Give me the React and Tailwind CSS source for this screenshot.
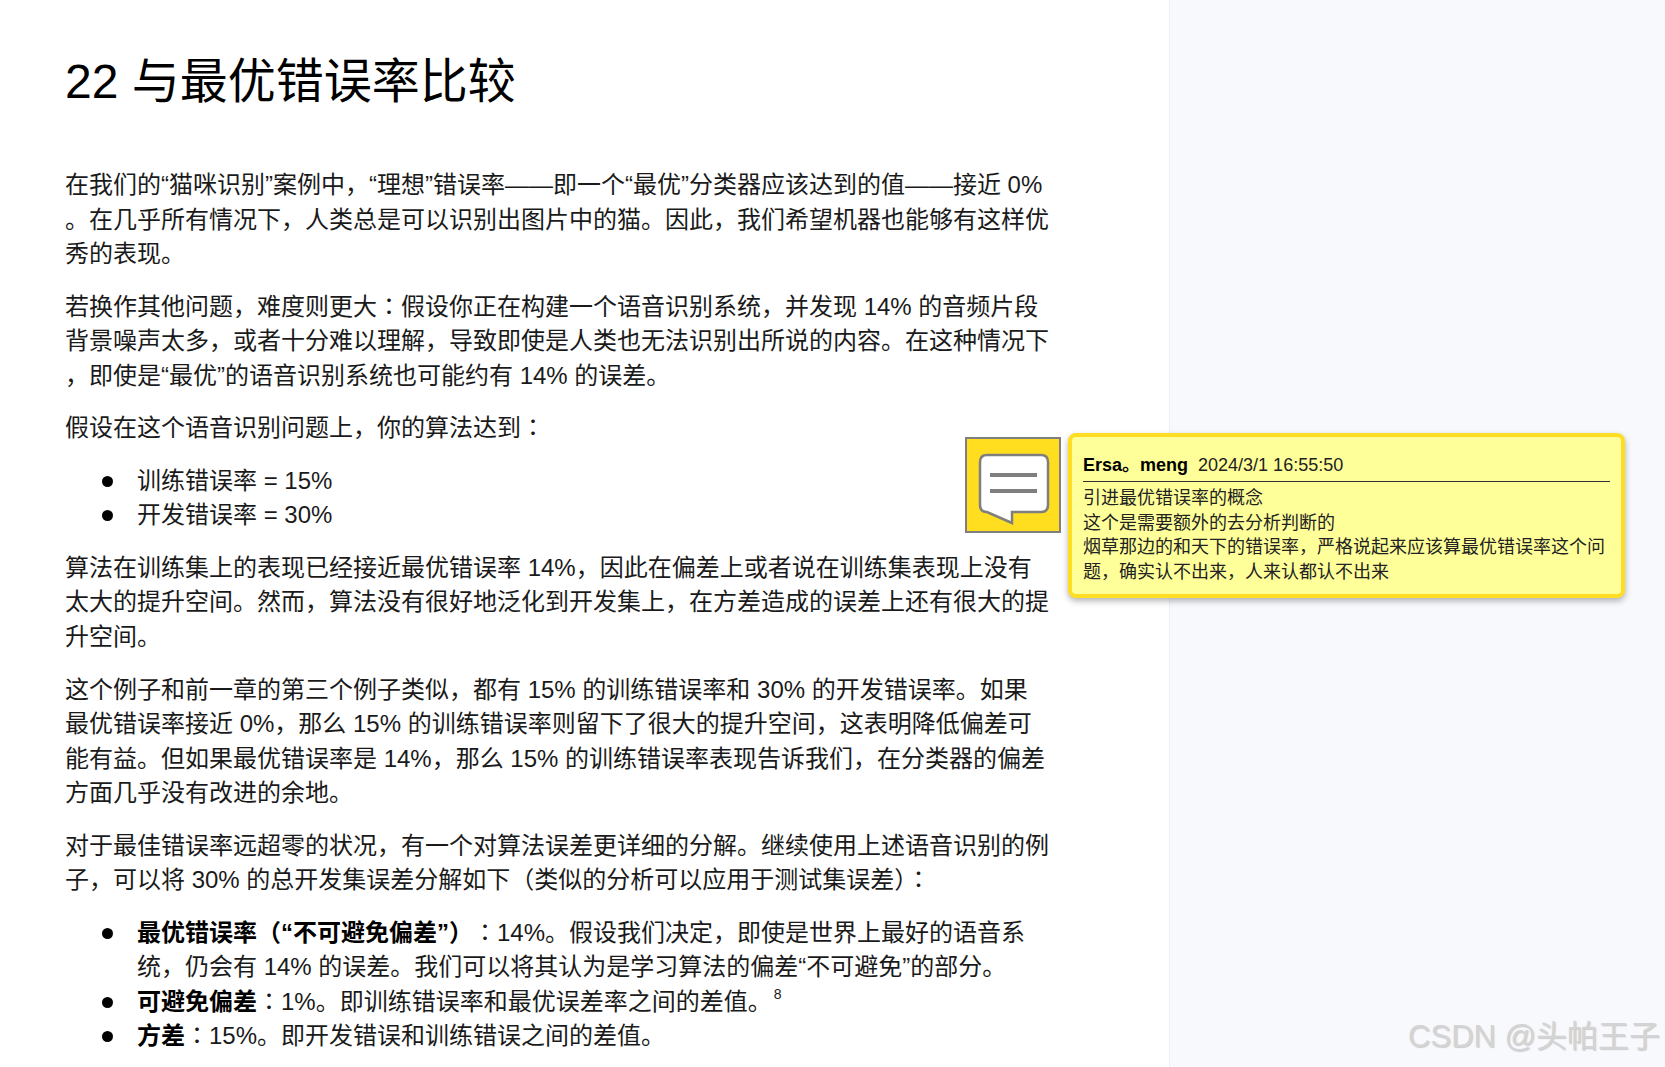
const Colon = ({ className = '' }) => <span className={`font-['Noto_Sans_CJK_JP'] leading-[0] ${className}`}>：</span>

const Para = ({ children }) => (
  <p className="mb-[18px] whitespace-nowrap">{children}</p>
)

const Bullet = ({ children }) => (
  <li className="flex whitespace-nowrap">
    <span className="w-[72px] flex justify-start pl-[37px] pt-[12px] shrink-0">
      <span className="block w-[11px] h-[11px] rounded-full bg-black"></span>
    </span>
    <span>{children}</span>
  </li>
)

const NoteIcon = () => (
  <div className="absolute left-[965px] top-[437px] w-[96px] h-[96px] bg-[#ffdd1f] border-2 border-[#7f7f7f]">
    <svg width="92" height="92" viewBox="0 0 92 92">
      <path d="M20 16 H74 Q81 16 81 23 V66 Q81 73 74 73 H45 V84 L20 73 Q13 73 13 66 V23 Q13 16 20 16 Z" fill="#fff" stroke="#7f7f7f" strokeWidth="2.5" />
      <rect x="23" y="34" width="47" height="4" fill="#7f7f7f" />
      <rect x="23" y="50" width="47" height="4" fill="#7f7f7f" />
    </svg>
  </div>
)

const Popup = () => (
  <div className="absolute left-[1068px] top-[433px] w-[557px] h-[165px] bg-[#ffff99] border-4 border-[#ffdd22] rounded-lg shadow-[0_3px_6px_rgba(0,0,0,0.3)] px-[11px] pt-[16px] text-[18px] leading-[24.4px] text-[#222]">
    <div className="pb-[4px] border-b border-[#333] whitespace-nowrap">
      <b className="text-black">Ersa。meng</b>
      <span className="ml-[10px]">2024/3/1 16:55:50</span>
    </div>
    <div className="pt-[4px] w-[526px]">
      引进最优错误率的概念<br />
      这个是需要额外的去分析判断的<br />
      烟草那边的和天下的错误率，严格说起来应该算最优错误率这个问<br />
      题，确实认不出来，人来认都认不出来
    </div>
  </div>
)

export default function App() {
  return (
    <div className="relative flex w-[1665px] h-[1067px] overflow-hidden bg-white font-['Liberation_Sans','Noto_Sans_CJK_SC',sans-serif]">
      <div className="w-[1169px] shrink-0 bg-white pl-[65px] pt-[54px] text-[24px] leading-[34.55px] text-[#1a1a1a]">
        <h1 className="text-[48px] leading-[56px] font-normal text-black mb-[58px]">22 与最优错误率比较</h1>

        <Para>
          在我们的“猫咪识别”案例中，“理想”错误率——即一个“最优”分类器应该达到的值——接近 0%<br />
          。在几乎所有情况下，人类总是可以识别出图片中的猫。因此，我们希望机器也能够有这样优<br />
          秀的表现。
        </Para>
        <Para>
          若换作其他问题，难度则更大<Colon />假设你正在构建一个语音识别系统，并发现 14% 的音频片段<br />
          背景噪声太多，或者十分难以理解，导致即使是人类也无法识别出所说的内容。在这种情况下<br />
          ，即使是“最优”的语音识别系统也可能约有 14% 的误差。
        </Para>
        <Para>假设在这个语音识别问题上，你的算法达到<Colon /></Para>

        <ul className="mb-[18px]">
          <Bullet>训练错误率 = 15%</Bullet>
          <Bullet>开发错误率 = 30%</Bullet>
        </ul>

        <Para>
          算法在训练集上的表现已经接近最优错误率 14%，因此在偏差上或者说在训练集表现上没有<br />
          太大的提升空间。然而，算法没有很好地泛化到开发集上，在方差造成的误差上还有很大的提<br />
          升空间。
        </Para>
        <Para>
          这个例子和前一章的第三个例子类似，都有 15% 的训练错误率和 30% 的开发错误率。如果<br />
          最优错误率接近 0%，那么 15% 的训练错误率则留下了很大的提升空间，这表明降低偏差可<br />
          能有益。但如果最优错误率是 14%，那么 15% 的训练错误率表现告诉我们，在分类器的偏差<br />
          方面几乎没有改进的余地。
        </Para>
        <Para>
          对于最佳错误率远超零的状况，有一个对算法误差更详细的分解。继续使用上述语音识别的例<br />
          子，可以将 30% 的总开发集误差分解如下（类似的分析可以应用于测试集误差）<Colon />
        </Para>

        <ul>
          <Bullet>
            <b className="text-black">最优错误率（“不可避免偏差”）</b><Colon className="ml-[12px]" />14%。假设我们决定，即使是世界上最好的语音系<br />
            统，仍会有 14% 的误差。我们可以将其认为是学习算法的偏差“不可避免”的部分。
          </Bullet>
          <Bullet>
            <b className="text-black">可避免偏差</b><Colon />1%。即训练错误率和最优误差率之间的差值。
            <sup className="text-[14px] leading-[0] ml-[2px] -top-[11px]">8</sup>
          </Bullet>
          <Bullet>
            <b className="text-black">方差</b><Colon />15%。即开发错误和训练错误之间的差值。
          </Bullet>
        </ul>
      </div>

      <div className="flex-1 bg-[#f8f9fd] border-l border-[#eeeff3]"></div>

      <NoteIcon />
      <Popup />

      <div className="absolute right-[5px] top-[1018px] text-[31px] leading-[38px] text-[#d4d4d4] [text-shadow:1px_1px_1px_rgba(120,120,120,0.35)] whitespace-nowrap">
        CSDN @头帕王子
      </div>
    </div>
  )
}
